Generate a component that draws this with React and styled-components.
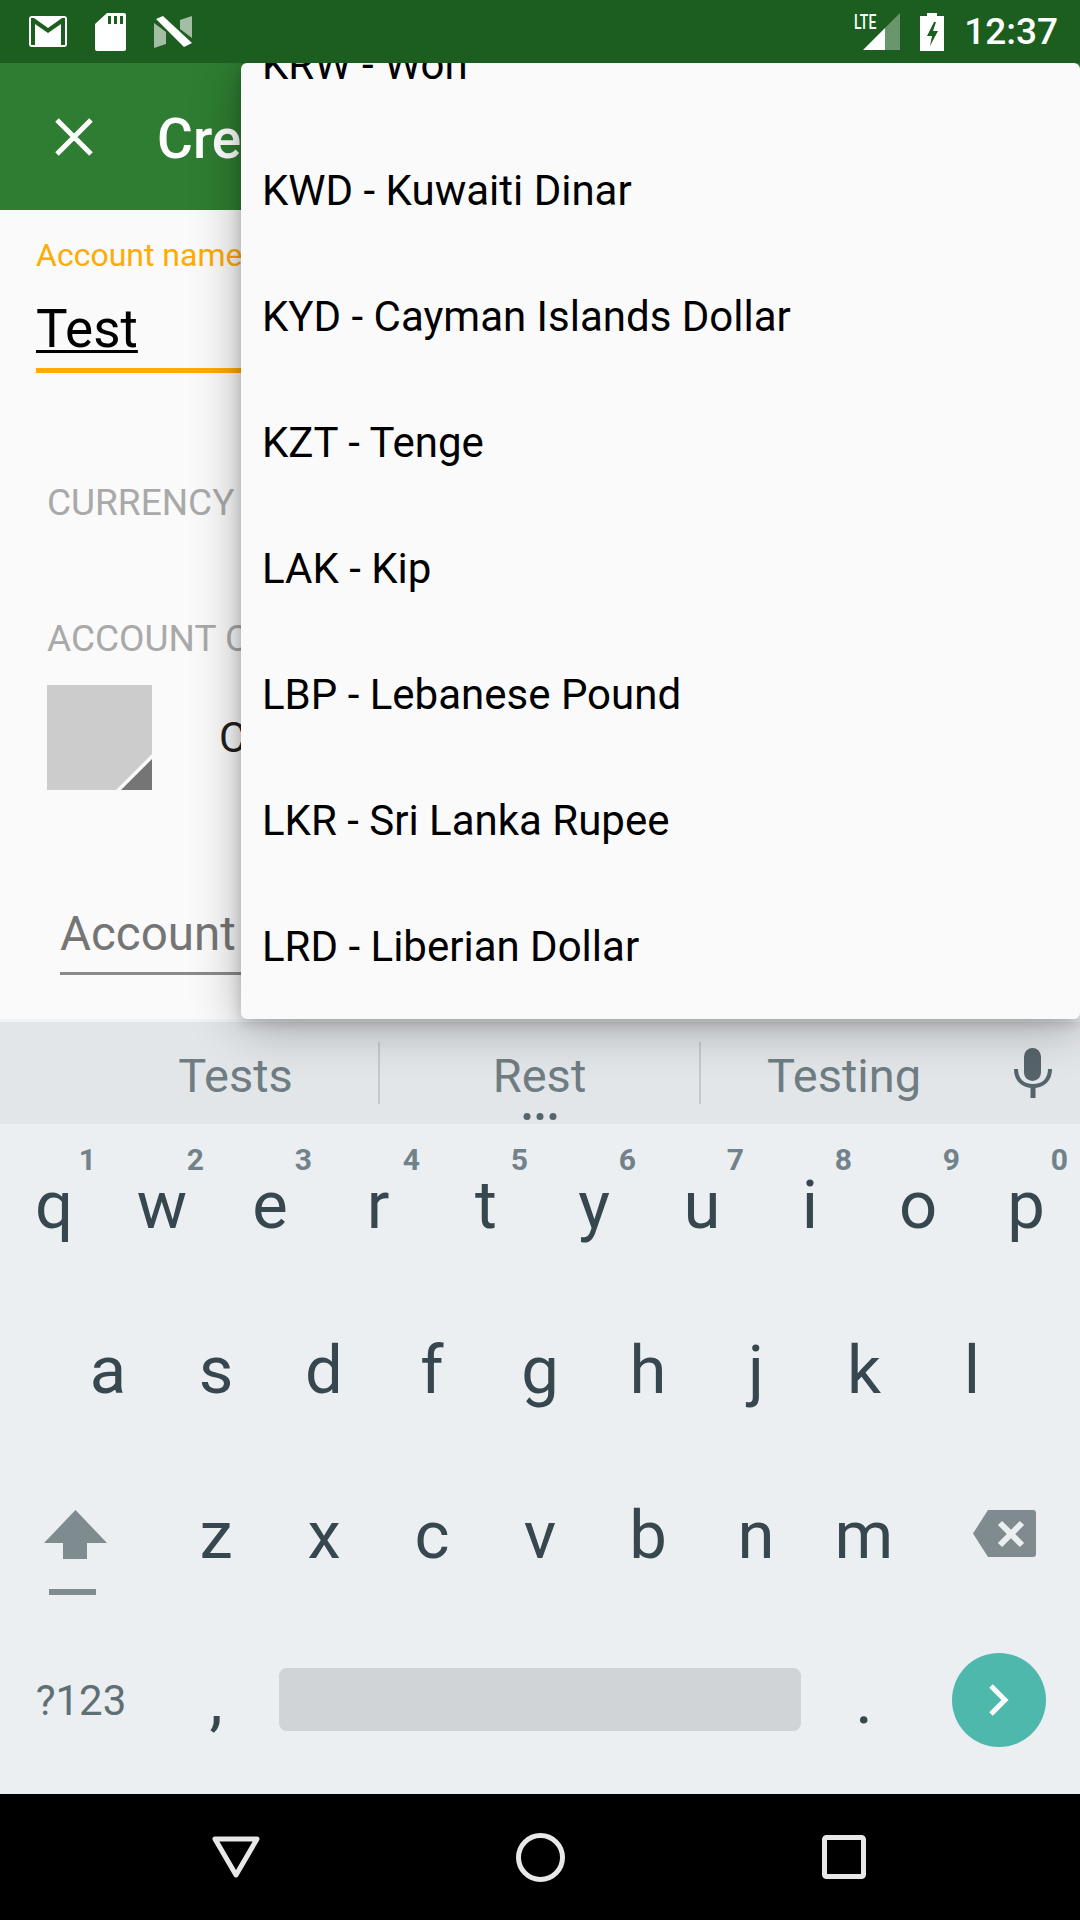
import React from 'react';
import styled, { createGlobalStyle } from 'styled-components';

const GlobalStyle = createGlobalStyle`
	html, body {
		margin: 0;
		padding: 0;
		background: #000;
	}
	* {
		box-sizing: border-box;
	}
`;

const currencies = [
	'KRW - Won',
	'KWD - Kuwaiti Dinar',
	'KYD - Cayman Islands Dollar',
	'KZT - Tenge',
	'LAK - Kip',
	'LBP - Lebanese Pound',
	'LKR - Sri Lanka Rupee',
	'LRD - Liberian Dollar',
];

const topRow = ['q', 'w', 'e', 'r', 't', 'y', 'u', 'i', 'o', 'p'];
const midRow = ['a', 's', 'd', 'f', 'g', 'h', 'j', 'k', 'l'];
const lowRow = ['z', 'x', 'c', 'v', 'b', 'n', 'm'];

const StatusIcons = () => (
	<>
		<S.LeftIcons>
			<svg width="38" height="31" viewBox="0 0 38 31">
				<path fill="#fff" fillRule="evenodd" d="M3 0h32a3 3 0 0 1 3 3v25a3 3 0 0 1-3 3H3a3 3 0 0 1-3-3V3a3 3 0 0 1 3-3zM2 2v27h4V8l13 9 13-9v21h4V2h-3L19 12 5 2z" />
			</svg>
			<svg width="31" height="38" viewBox="0 0 31 38">
				<path fill="#fff" fillRule="evenodd" d="M12 0h17a2 2 0 0 1 2 2v34a2 2 0 0 1-2 2H2a2 2 0 0 1-2-2V11zM13 3v8h3V3zM19 3v8h3V3zM25 3v8h3V3z" />
			</svg>
			<svg width="38" height="32" viewBox="0 0 38 32">
				<path fill="#fff" opacity=".6" d="M0 7l12 9v12L0 32zM26 4l12-4v22L26 13z" />
				<path fill="#fff" d="M2 3l7-3 29 27-8 4z" />
			</svg>
		</S.LeftIcons>
		<S.RightIcons>
			<S.SignalWrap>
				<S.LteText>LTE</S.LteText>
				<svg width="37" height="37" viewBox="0 0 37 37">
					<path fill="#fff" opacity=".35" d="M22 15L37 0v37H22z" />
					<path fill="#fff" d="M0 37l22-22v22z" />
				</svg>
			</S.SignalWrap>
			<svg width="24" height="38" viewBox="0 0 24 38">
				<path fill="#fff" fillRule="evenodd" d="M7 0h10v3h7v35H0V3h7zM14 9l-7 14h5l-2 10 8-15h-5l3-9z" />
			</svg>
			<S.Clock>12:37</S.Clock>
		</S.RightIcons>
	</>
);

const Key = ({ label, hint }) => (
	<S.Key>
		{label}
		{hint && <S.Hint>{hint}</S.Hint>}
	</S.Key>
);

const App = () => {
	return (
		<S.Page>
			<GlobalStyle />
			<S.StatusBar>
				<StatusIcons />
			</S.StatusBar>
			<S.Toolbar>
				<svg width="38" height="38" viewBox="0 0 38 38">
					<path stroke="#fff" strokeWidth="5" d="M2 2l34 34M36 2L2 36" />
				</svg>
				<S.Title>Create Account</S.Title>
			</S.Toolbar>
			<S.Form>
				<S.NameField>
					<S.FloatLabel>Account name</S.FloatLabel>
					<S.NameValue>Test</S.NameValue>
				</S.NameField>
				<S.Section $top={110}>CURRENCY</S.Section>
				<S.Section $top={96}>ACCOUNT C</S.Section>
				<S.ColorRow>
					<S.Swatch>
						<svg width="105" height="105" viewBox="0 0 105 105">
							<path fill="#fafafa" d="M69 105l36-36v6L75 105z" />
							<path fill="#757575" d="M74 105l31-31v31z" />
						</svg>
					</S.Swatch>
					<S.ColorName>C</S.ColorName>
				</S.ColorRow>
				<S.DescField>Account</S.DescField>
			</S.Form>
			<S.Keyboard>
				<S.Suggestions>
					<S.Suggestion $w={285}>Tests</S.Suggestion>
					<S.Suggestion $w={321} $divided>
						Rest
						<S.Dots>
							<i /><i /><i />
						</S.Dots>
					</S.Suggestion>
					<S.Suggestion $w={288} $divided>Testing</S.Suggestion>
					<S.MicSlot>
						<svg width="38" height="50" viewBox="0 0 38 50">
							<rect x="10" y="0" width="17" height="33" rx="8.5" fill="#56646b" />
							<path fill="none" stroke="#56646b" strokeWidth="4" d="M2 21c0 11 7 17 17 17s17-6 17-17" />
							<path stroke="#56646b" strokeWidth="5" d="M19 37v13" />
						</svg>
					</S.MicSlot>
				</S.Suggestions>
				<S.TopKeys>
					{topRow.map((k, i) => (
						<Key key={k} label={k} hint={String((i + 1) % 10)} />
					))}
				</S.TopKeys>
				<S.MidKeys>
					{midRow.map(k => <Key key={k} label={k} />)}
				</S.MidKeys>
				<S.LowKeys>
					<S.ShiftKey>
						<svg width="63" height="86" viewBox="0 0 63 86">
							<path fill="#7f8c8f" d="M31.5 0L63 33H43v16H19V33H0z" />
							<path fill="#7f8c8f" d="M5 79h47v6H5z" />
						</svg>
					</S.ShiftKey>
					{lowRow.map(k => <Key key={k} label={k} />)}
					<S.BackKey>
						<svg width="63" height="47" viewBox="0 0 63 47">
							<path fill="#7f8b8e" d="M15 0h45a3 3 0 0 1 3 3v41a3 3 0 0 1-3 3H15L0 23.500z" />
							<path stroke="#eceff1" strokeWidth="6" d="M27 13l22 22M49 13L27 35" />
						</svg>
					</S.BackKey>
				</S.LowKeys>
				<S.BottomKeys>
					<S.SymbolKey>?123</S.SymbolKey>
					<Key label="," />
					<S.SpaceSlot>
						<S.SpaceBar />
					</S.SpaceSlot>
					<Key label="." />
					<S.EnterSlot>
						<S.EnterButton>
							<svg width="20" height="32" viewBox="0 0 20 32">
								<path fill="none" stroke="#fff" strokeWidth="5" d="M2 2l14 14L2 30" />
							</svg>
						</S.EnterButton>
					</S.EnterSlot>
				</S.BottomKeys>
			</S.Keyboard>
			<S.NavBar>
				<svg width="48" height="42" viewBox="0 0 48 42">
					<path fill="none" stroke="#e8e8e8" strokeWidth="5" strokeLinejoin="round" d="M3 3h42L24 39z" />
				</svg>
				<svg width="49" height="49" viewBox="0 0 49 49">
					<circle cx="24.5" cy="24.5" r="22" fill="none" stroke="#e8e8e8" strokeWidth="5" />
				</svg>
				<svg width="44" height="44" viewBox="0 0 44 44">
					<rect x="2.500" y="2.500" width="39" height="39" rx="2" fill="none" stroke="#e8e8e8" strokeWidth="5" />
				</svg>
			</S.NavBar>
			<S.Popup>
				<S.PopupList>
					{currencies.map(item => (
						<S.PopupItem key={item}>{item}</S.PopupItem>
					))}
				</S.PopupList>
			</S.Popup>
		</S.Page>
	);
};

export default App;

const S = {};
S.Page = styled.div`
	position: relative;
	width: 1080px;
	height: 1920px;
	overflow: hidden;
	display: flex;
	flex-direction: column;
	font-family: Roboto, "Liberation Sans", sans-serif;
	background: #fafafa;
`;
S.StatusBar = styled.div`
	position: relative;
	z-index: 3;
	flex: 0 0 63px;
	display: flex;
	align-items: center;
	justify-content: space-between;
	padding: 0 22px 0 29px;
	background: #1b5e20;
`;
S.LeftIcons = styled.div`
	display: flex;
	align-items: center;
	gap: 28px;
`;
S.RightIcons = styled.div`
	display: flex;
	align-items: center;
`;
S.SignalWrap = styled.div`
	position: relative;
	display: flex;
	margin-right: 20px;
`;
S.LteText = styled.span`
	position: absolute;
	left: -9px;
	top: 1px;
	font: 500 20px/16px "Roboto", sans-serif;
	color: #fff;
	transform: scaleX(.7);
	transform-origin: left center;
`;
S.Clock = styled.span`
	margin-left: 20px;
	font-size: 37px;
	font-weight: 500;
	line-height: 44px;
	color: #fff;
`;
S.Toolbar = styled.div`
	flex: 0 0 147px;
	display: flex;
	align-items: center;
	padding-left: 55px;
	background: #2e7d32;
	svg {
		flex: none;
	}
`;
S.Title = styled.div`
	margin: 4px 0 0 64px;
	font-size: 55px;
	font-weight: 500;
	color: #fff;
	white-space: nowrap;
`;
S.Form = styled.div`
	flex: 0 0 809px;
	padding-top: 25px;
	background: #fafafa;
`;
S.NameField = styled.div`
	margin-left: 36px;
	padding-bottom: 14px;
	border-bottom: 5px solid #ffab00;
`;
S.FloatLabel = styled.div`
	font-size: 32px;
	line-height: 40px;
	color: #ffab00;
`;
S.NameValue = styled.div`
	margin-top: 29px;
	font-size: 53px;
	line-height: 50px;
	color: #000;
	text-decoration: underline;
	text-decoration-thickness: 3px;
	text-underline-offset: 3px;
`;
S.Section = styled.div`
	margin: ${p => p.$top}px 0 0 47px;
	font-size: 37px;
	line-height: 40px;
	color: #a9a9a9;
`;
S.ColorRow = styled.div`
	display: flex;
	align-items: center;
	gap: 67px;
	margin: 26px 0 0 47px;
`;
S.Swatch = styled.div`
	width: 105px;
	height: 105px;
	background: #ccc;
	svg {
		display: block;
	}
`;
S.ColorName = styled.div`
	font-size: 42px;
	color: #212121;
`;
S.DescField = styled.div`
	margin: 119px 0 0 60px;
	padding-bottom: 13px;
	border-bottom: 3px solid #8a8a8a;
	font-size: 47.500px;
	line-height: 50px;
	color: #757575;
`;
S.Keyboard = styled.div`
	flex: 0 0 775px;
	background: #eceff1;
`;
S.Suggestions = styled.div`
	height: 105px;
	display: flex;
	align-items: center;
	padding-left: 93px;
	border-top: 3px solid #f1f2f3;
	background: #e3e6e9;
`;
S.Suggestion = styled.div`
	position: relative;
	flex: 0 0 ${p => p.$w}px;
	height: 62px;
	display: flex;
	align-items: center;
	justify-content: center;
	padding-top: 5px;
	font-size: 47px;
	color: #6f7d83;
	border-left: ${p => (p.$divided ? '2px solid #c5cacd' : 'none')};
`;
S.Dots = styled.div`
	position: absolute;
	bottom: -16px;
	left: 50%;
	transform: translateX(-50%);
	display: flex;
	gap: 6px;
	i {
		width: 7px;
		height: 7px;
		border-radius: 50%;
		background: #56646b;
	}
`;
S.MicSlot = styled.div`
	flex: 0 0 91px;
	display: flex;
	justify-content: center;
`;
S.Key = styled.div`
	position: relative;
	height: 165px;
	display: flex;
	align-items: center;
	justify-content: center;
	font-size: 67px;
	line-height: 1;
	color: #37474f;
	padding-bottom: 2px;
`;
S.Hint = styled.span`
	position: absolute;
	top: 21px;
	right: 12px;
	font-size: 30px;
	font-weight: 700;
	line-height: 30px;
	color: #72828a;
`;
S.TopKeys = styled.div`
	display: grid;
	grid-template-columns: repeat(10, 108px);
`;
S.MidKeys = styled.div`
	display: grid;
	grid-template-columns: repeat(9, 108px);
	padding-left: 54px;
`;
S.LowKeys = styled.div`
	display: grid;
	grid-template-columns: 162px repeat(7, 108px) 162px;
`;
S.ShiftKey = styled.div`
	height: 165px;
	display: flex;
	align-items: flex-start;
	padding: 56px 0 0 44px;
`;
S.BackKey = styled.div`
	height: 165px;
	display: flex;
	align-items: flex-start;
	padding: 56px 0 0 55px;
`;
S.BottomKeys = styled.div`
	display: grid;
	grid-template-columns: 162px 108px 540px 108px 162px;
`;
S.SymbolKey = styled.div`
	height: 163px;
	display: flex;
	align-items: center;
	justify-content: center;
	font-size: 42px;
	color: #5f6f76;
`;
S.SpaceSlot = styled.div`
	height: 161px;
	display: flex;
	align-items: center;
	padding: 0 9px;
`;
S.SpaceBar = styled.div`
	width: 100%;
	height: 63px;
	border-radius: 8px;
	background: #d0d4d7;
`;
S.EnterSlot = styled.div`
	height: 161px;
	display: flex;
	align-items: center;
	justify-content: center;
`;
S.EnterButton = styled.div`
	width: 94px;
	height: 94px;
	display: flex;
	align-items: center;
	justify-content: center;
	border-radius: 50%;
	background: #4fb8ad;
`;
S.NavBar = styled.div`
	flex: 0 0 126px;
	display: grid;
	grid-template-columns: repeat(3, 304px);
	justify-content: center;
	justify-items: center;
	align-items: center;
	background: #000;
`;
S.Popup = styled.div`
	position: absolute;
	top: 63px;
	left: 241px;
	right: 0;
	height: 956px;
	z-index: 2;
	overflow: hidden;
	border-radius: 6px;
	background: #fafafa;
	box-shadow: 0 8px 50px rgba(0, 0, 0, .3), 0 3px 14px rgba(0, 0, 0, .18);
`;
S.PopupList = styled.div`
	margin-top: -62px;
`;
S.PopupItem = styled.div`
	height: 126px;
	display: flex;
	align-items: center;
	padding-left: 21px;
	font-size: 42px;
	color: #000;
	white-space: nowrap;
`;
